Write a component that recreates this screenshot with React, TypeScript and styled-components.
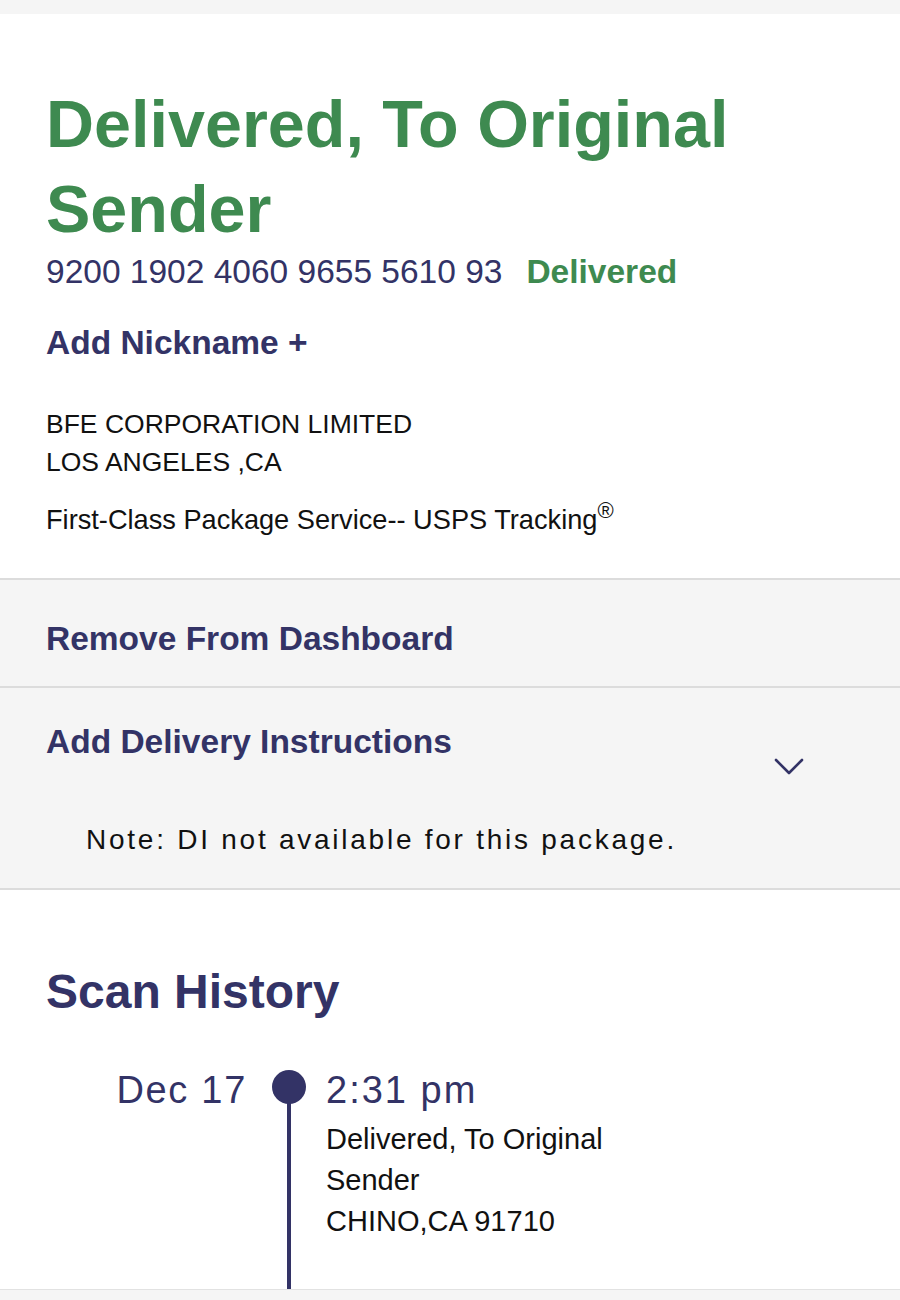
import React from 'react';
import styled, { createGlobalStyle } from 'styled-components';

const GlobalStyle = createGlobalStyle`
  html, body {
    margin: 0;
    padding: 0;
    background: #ffffff;
  }
  body {
    font-family: "Liberation Sans", Arial, Helvetica, sans-serif;
    -webkit-font-smoothing: antialiased;
  }
`;

const NAVY = '#333366';
const GREEN = '#3e8a50';

const Page = styled.div`
  width: 900px;
  height: 1300px;
  overflow: hidden;
  display: flex;
  flex-direction: column;
  background: #ffffff;
`;

const TopStrip = styled.div`
  height: 14px;
  background: #f5f5f5;
`;

const Summary = styled.section`
  padding: 68px 46px 39px;
  border-bottom: 2px solid #dcdcdc;
`;

const Title = styled.h1`
  margin: 0;
  font-size: 66.5px;
  line-height: 85px;
  font-weight: 700;
  color: ${GREEN};
  max-width: 720px;
`;

const TrackingLine = styled.div`
  display: flex;
  align-items: baseline;
  font-size: 33.5px;
  line-height: 40px;
  color: ${NAVY};
`;

const Status = styled.span`
  margin-left: 24px;
  font-weight: 700;
  color: ${GREEN};
`;

const Nickname = styled.div`
  margin-top: 31px;
  font-size: 33.5px;
  line-height: 40px;
  font-weight: 700;
  color: ${NAVY};
`;

const Address = styled.div`
  margin-top: 42px;
  font-size: 26.5px;
  line-height: 38px;
  color: #111111;
`;

const Service = styled.div`
  margin-top: 20px;
  font-size: 27.2px;
  line-height: 38px;
  color: #111111;

  sup {
    font-size: 22px;
    line-height: 0;
    vertical-align: 11px;
  }
`;

const ActionRow = styled.div<{ $top: number; $bottom: number }>`
  background: #f5f5f5;
  padding: ${p => p.$top}px 46px ${p => p.$bottom}px;
  border-bottom: 2px solid #dcdcdc;
`;

const ActionHeader = styled.div`
  display: flex;
  justify-content: space-between;
  align-items: flex-start;
`;

const ActionLabel = styled.div`
  font-size: 33.5px;
  line-height: 40px;
  font-weight: 700;
  color: ${NAVY};
`;

const Chevron = styled.svg`
  margin-top: 36px;
  margin-right: 50px;
  width: 30px;
  height: 18px;
`;

const Note = styled.div`
  margin-top: 46px;
  padding-left: 40px;
  font-size: 28px;
  line-height: 36px;
  letter-spacing: 2.75px;
  color: #111111;
`;

const History = styled.section`
  flex: 1;
  padding: 74px 46px 0;
  display: flex;
  flex-direction: column;
`;

const HistoryTitle = styled.h2`
  margin: 0;
  font-size: 48px;
  line-height: 56px;
  font-weight: 700;
  color: ${NAVY};
`;

const Event = styled.div`
  margin-top: 48px;
  flex: 1;
  display: grid;
  grid-template-columns: 201px 34px 1fr;
`;

const EventDate = styled.div`
  text-align: right;
  font-size: 38px;
  line-height: 44px;
  letter-spacing: 1.7px;
  color: ${NAVY};
`;

const Rail = styled.div`
  margin-left: 25px;
  width: 34px;
  display: flex;
  flex-direction: column;
  align-items: center;
`;

const Dot = styled.div`
  margin-top: 2px;
  width: 34px;
  height: 34px;
  border-radius: 50%;
  background: ${NAVY};
`;

const RailLine = styled.div`
  flex: 1;
  width: 4px;
  margin-top: -2px;
  background: ${NAVY};
`;

const EventBody = styled.div`
  padding-left: 45px;
`;

const EventTime = styled.div`
  font-size: 38px;
  line-height: 44px;
  letter-spacing: 2px;
  color: ${NAVY};
`;

const EventDetail = styled.div`
  margin-top: 7px;
  width: 310px;
  font-size: 29px;
  line-height: 41px;
  color: #111111;
`;

const BottomStrip = styled.div`
  height: 10px;
  background: #f5f5f5;
  border-top: 1px solid #e2e2e2;
`;

export default function App() {
  return (
    <>
      <GlobalStyle />
      <Page>
        <TopStrip />
        <Summary>
          <Title>Delivered, To Original Sender</Title>
          <TrackingLine>
            <span>9200 1902 4060 9655 5610 93</span>
            <Status>Delivered</Status>
          </TrackingLine>
          <Nickname>Add Nickname +</Nickname>
          <Address>
            BFE CORPORATION LIMITED
            <br />
            LOS ANGELES ,CA
          </Address>
          <Service>
            First-Class Package Service-- USPS Tracking<sup>®</sup>
          </Service>
        </Summary>

        <ActionRow $top={39} $bottom={27}>
          <ActionLabel>Remove From Dashboard</ActionLabel>
        </ActionRow>

        <ActionRow $top={34} $bottom={30}>
          <ActionHeader>
            <ActionLabel>Add Delivery Instructions</ActionLabel>
            <Chevron viewBox="0 0 30 18" fill="none">
              <path d="M2 2 L15 15 L28 2" stroke={NAVY} strokeWidth="2.6" strokeLinecap="round" strokeLinejoin="round" />
            </Chevron>
          </ActionHeader>
          <Note>Note: DI not available for this package.</Note>
        </ActionRow>

        <History>
          <HistoryTitle>Scan History</HistoryTitle>
          <Event>
            <EventDate>Dec 17</EventDate>
            <Rail>
              <Dot />
              <RailLine />
            </Rail>
            <EventBody>
              <EventTime>2:31 pm</EventTime>
              <EventDetail>
                Delivered, To Original Sender
                <br />
                CHINO,CA 91710
              </EventDetail>
            </EventBody>
          </Event>
        </History>
        <BottomStrip />
      </Page>
    </>
  );
}
